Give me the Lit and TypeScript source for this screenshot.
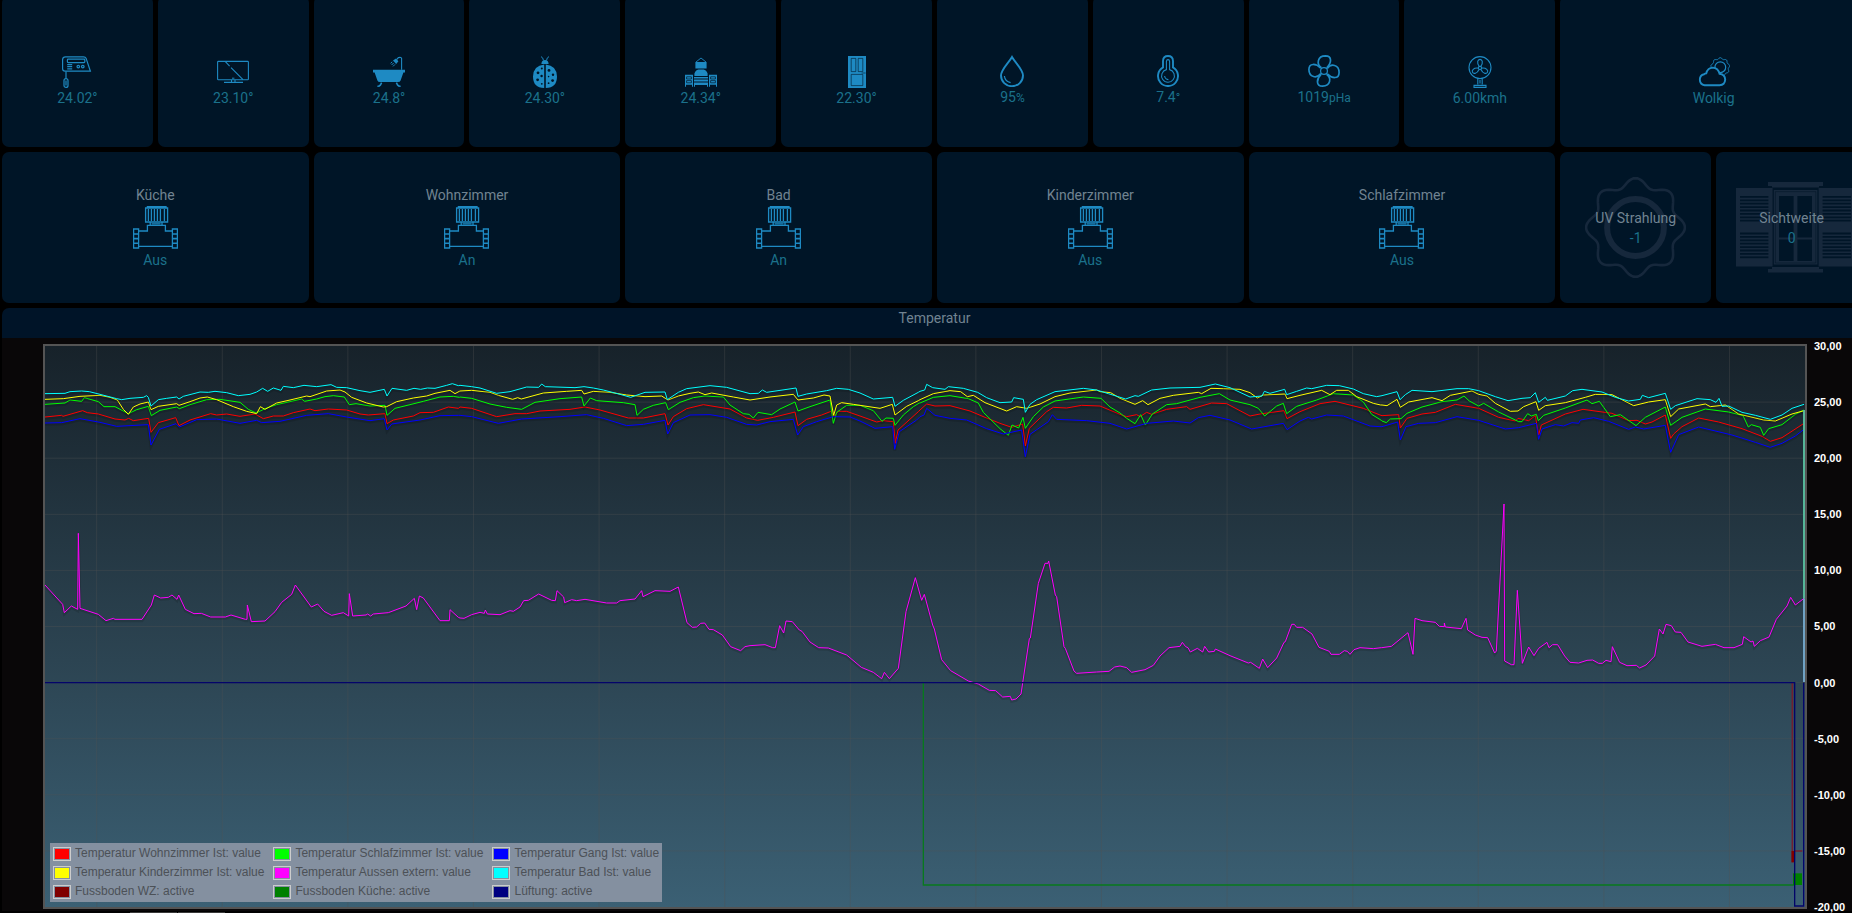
import { LitElement, html, svg, css, nothing, type SVGTemplateResult } from "lit";
import { customElement, property } from "lit/decorators.js";

/** Closed wavy ring: radius r, swing a, n lobes. */
function wave(cx: number, cy: number, r: number, a: number, n: number): string {
  const pts: string[] = [];
  for (let i = 0; i < 160; i++) {
    const t = (i / 160) * Math.PI * 2;
    const q = r + a * Math.cos(n * t);
    pts.push(`${(cx + q * Math.sin(t)).toFixed(2)} ${(cy - q * Math.cos(t)).toFixed(2)}`);
  }
  return `M${pts.join("L")}Z`;
}

const DARK = "#001527";

const ICONS: Record<string, SVGTemplateResult> = {
  mixer: svg`<g fill="none" stroke="currentColor" stroke-width="1.2">
    <path d="M4.5 .8H22.5Q24.4 .8 25.2 2.6L29.4 15.2H4Q1.6 15.2 1.6 12.8V3.4Q1.8 .8 4.5 .8Z"/>
    <rect x="6.4" y="3.2" width="17.4" height="3.4" rx=".8"/>
    <path d="M6.2 8.6h5M6.2 10.6h5M6.2 12.8h5M5 15.4V22.5"/>
    <circle cx="17.3" cy="10.6" r="1.3"/><circle cx="21.8" cy="10.6" r="1.3"/>
    <rect x="3" y="22.6" width="4" height="8.8" rx="2"/><path d="M5 24.5v5"/></g>`,
  tv: svg`<g fill="none" stroke="currentColor" stroke-width="1.1">
    <rect x=".6" y="5.4" width="30.8" height="18.4" rx=".8"/>
    <path d="M8.4 5.6l4.2 4.6M14 11.6l12 12M14.5 24v2M18 24v2M7 26.4h19"/><path d="M15 22.2h2.4" stroke-width="1"/></g>`,
  bath: svg`<g fill="currentColor"><path d="M0 13.8H32V16.6H30.4L27.6 24.4Q27 26 25 26H7Q5 26 4.4 24.4L1.6 16.6H0Z"/>
    <g fill="none" stroke="currentColor"><path d="M28.6 13.8V2.4Q28.4 1 25.4 1.6L23.6 3.6" stroke-width="1.1"/>
    <path d="M8.6 26.6L7.4 29Q6.4 30.4 4.4 30.2M23.4 26.6L24.6 29Q25.6 30.4 27.6 30.2" stroke-width="1.6"/>
    <path d="M20.6 7l-2 2M22 8.4l-2 2M19.2 5.8l-1.6 1.6" stroke-width="1"/></g>
    <path d="M20 4.6l3-2 2.4 2.6-2.2 2.8z"/></g>`,
  bug: svg`<g fill="currentColor"><path d="M12.4 8Q12.6 4 16 4T19.6 8Z"/>
    <path d="M15.2 8.4V32Q4 31.6 4 20.4 4.4 9.4 15.2 8.4ZM16.8 8.4V32Q28 31.6 28 20.4 27.6 9.4 16.8 8.4Z"/>
    <path d="M14.4 4.4Q14.4 1.8 12 .6M17.6 4.4Q17.6 1.8 20 .6" fill="none" stroke="currentColor" stroke-width="1"/>
    <g fill="${DARK}"><circle cx="12.8" cy="12.4" r="1"/><circle cx="9" cy="16.8" r="1.4"/><circle cx="12.6" cy="20" r="1.2"/>
    <circle cx="8.6" cy="23.8" r="1.4"/><circle cx="12.8" cy="27.8" r=".9"/><circle cx="20" cy="14.4" r="1.4"/>
    <circle cx="24" cy="18.8" r="1.2"/><circle cx="19.6" cy="20.6" r=".8"/><circle cx="23.6" cy="24.6" r="1.4"/><circle cx="19.6" cy="27.2" r=".9"/></g></g>`,
  bed: svg`<g fill="currentColor"><path d="M10.4 6H21.6V12.4H10.4Z"/>
    <path d="M11 6L16 2L21 6" fill="none" stroke="currentColor" stroke-width=".9"/>
    <path d="M9.4 20V17.6Q10.6 14 13.4 13.6H18.6Q21.4 14 22.6 17.6V20ZM9 21H23V22.4H9ZM9 23.6H23V25.4H9ZM9 26.4H23V30.8H22V29H10V30.8H9Z"/>
    <path d="M0 18.8H8V30.8H7V28.8H1V30.8H0ZM24 18.8H32V30.8H31V28.8H25V30.8H24Z"/>
    <path d="M1.6 20.8H6.4V23H1.6ZM1.6 24.6H6.4V26.8H1.6ZM25.6 20.8H30.4V23H25.6ZM25.6 24.6H30.4V26.8H25.6Z" fill="none" stroke="${DARK}" stroke-width=".7"/></g>`,
  door: svg`<path d="M7 0H25V32H7Z" fill="currentColor"/>
    <g fill="none" stroke="${DARK}" stroke-width=".6"><path d="M10.2 2.4H14.8V15.6H10.2ZM17.2 2.4H21.8V15.6H17.2ZM10.2 18.4H21.8V29.6H10.2Z"/><path d="M20.6 17h4"/></g>`,
  drop: svg`<g fill="none" stroke="currentColor"><path d="M16 2C19.6 8.4 27 14.6 27 20.6A11 10.6 0 0 1 5 20.6C5 14.6 12.4 8.4 16 2Z" stroke-width="1.9"/>
    <path d="M8.4 21Q9 26.6 14.6 27.6" stroke-width="1.2"/></g>`,
  thermo: svg`<g fill="none" stroke="currentColor"><path d="M11 12.4V6Q11.2 1 16 1T21 6V12.4A10 10 0 1 1 11 12.4Z" stroke-width="1.9"/>
    <path d="M14.4 14.6V6.4Q14.6 4.6 16 4.6T17.6 6.4V14.6A6.4 6.4 0 1 1 14.4 14.6Z" stroke-width="1.1"/>
    <path d="M12.6 21Q13 24.2 16.4 24.6" stroke-width="1.1"/></g>`,
  rotor: svg`<g fill="none" stroke="currentColor" stroke-width="1.7">
    ${[0, 90, 180, 270].map((a) => svg`<path transform="rotate(${a} 16 16)" d="M13.4 12.8C8.2 9 9.4 1 17.4 .9C24.4 1 23.6 8 18.8 12.8"/>`)}
    <circle cx="16" cy="16" r="3.4" stroke-width="1.2"/></g>`,
  fan: svg`<g fill="none" stroke="currentColor" stroke-width="1.1"><circle cx="16" cy="11.6" r="11"/>
    ${[0, 120, 240].map((a) => svg`<path transform="rotate(${a} 16 12)" d="M15.2 10.4C12.4 6.6 13.8 3.4 16 3.4S19.6 6.6 16.8 10.4"/>`)}
    <circle cx="16" cy="12" r="1.6"/><path d="M13.8 22.6V28.6M18.2 22.6V28.6M16 24v3.6" /><path d="M10 31.4V29.4H22V31.4Z"/></g>`,
  cloud: svg`<g fill="none" stroke="currentColor"><path d="${wave(22.3, 11.2, 8.8, 0.7, 9)}" stroke-width="1"/>
    <circle cx="22.3" cy="11.2" r="5.4" stroke-width="1.2"/>
    <path d="M6.6 29.2A5.6 5.6 0 0 1 6.2 18.2Q7 17.4 8.2 17.4Q9.6 11.8 14.8 11.6Q20 11.8 21.6 17.8Q27 18.6 27.2 23.6Q26.8 29 21.6 29.2Z" fill="${DARK}" stroke-width="1.9"/></g>`,
  valve: svg`<g fill="none" stroke="currentColor" stroke-width="1.3">
    <path d="M14.4 3V1.6H33V3M12.6 3H34.6V17H12.6ZM15.4 4V16M18.4 4V16M21.4 4V16M24.4 4V16M27.4 4V16M31.4 4V16"/>
    <path d="M17.2 17V20M29 17V20M18.6 18.8h9"/>
    <path d="M5.6 26H14.4V20.4H32.4V26H39.4M5.6 41.4H39.4"/>
    <path d="M.6 24H5.6V43H.6ZM39.4 24H44.4V43H39.4Z"/><path d="M.6 29H5.6M.6 33.6H5.6M.6 38.2H5.6M39.4 29H44.4M39.4 33.6H44.4M39.4 38.2H44.4" stroke-width="1.6"/></g>`,
  uv: svg`<g fill="none" stroke="currentColor"><path d="${wave(50.5, 50.5, 45.2, 4.2, 8)}" stroke-width="2.6"/>
    <circle cx="50.5" cy="50.5" r="28.4" stroke-width="6"/></g>`,
  window: svg`<g fill="currentColor"><path d="M32 5H87V9H83V10.6H36V9H32ZM32 95.6H87V92H83V90H36V92H32Z"/>
    ${[0, 82.6].map((x) => svg`<path d="M${x} 11H${x + 36.6}V89.6H${x}Z"/>
      ${[19, 55.6].map((y) => [0, 1, 2, 3, 4, 5, 6, 7].map((i) => svg`<path d="M${x + 4} ${y + i * 3.4}h28.4v1.8h-28.4z" fill="${DARK}"/>`))}`)}
    <path d="M37.8 13H81.4V87.6H37.8Z"/>
    <path d="M43 19H57.6V60.4H43ZM61.4 19H76V60.4H61.4ZM43 62.4H57.6V84H43ZM61.4 62.4H76V84H61.4Z" fill="${DARK}"/>
    <path d="M39.4 14.6H79.8V86H39.4Z" fill="none" stroke="${DARK}" stroke-width=".5"/></g>`,
};

interface Tile {
  icon: string;
  title?: string;
  value: string;
  unit?: string;
  kind: "sensor" | "valve" | "backdrop";
  span: number;
}

const sensor = (icon: string, value: string, unit = "", span = 1): Tile => ({ icon, value, unit, span, kind: "sensor" });
const valve = (title: string, value: string): Tile => ({ icon: "valve", title, value, span: 2, kind: "valve" });
const backdrop = (icon: string, title: string, value: string): Tile => ({ icon, title, value, span: 1, kind: "backdrop" });

const TILES: Tile[] = [
  sensor("mixer", "24.02°"),
  sensor("tv", "23.10°"),
  sensor("bath", "24.8°"),
  sensor("bug", "24.30°"),
  sensor("bed", "24.34°"),
  sensor("door", "22.30°"),
  sensor("drop", "95", "%"),
  sensor("thermo", "7.4", "°"),
  sensor("rotor", "1019", "pHa"),
  sensor("fan", "6.00kmh"),
  sensor("cloud", "Wolkig", "", 2),
  valve("Küche", "Aus"),
  valve("Wohnzimmer", "An"),
  valve("Bad", "An"),
  valve("Kinderzimmer", "Aus"),
  valve("Schlafzimmer", "Aus"),
  backdrop("uv", "UV Strahlung", "-1"),
  backdrop("window", "Sichtweite", "0"),
];

@customElement("dash-tile")
class DashTile extends LitElement {
  @property({ attribute: false }) tile!: Tile;

  static styles = css`
    :host {
      display: grid;
      place-items: center;
      position: relative;
      overflow: hidden;
      background: #001527;
      border-radius: 7px;
      color: #1b718b;
    }
    .body {
      position: relative;
      display: flex;
      flex-direction: column;
      align-items: center;
      line-height: 20px;
    }
    .sensor {
      padding-top: 20px;
    }
    .title {
      color: #718391;
    }
    svg {
      display: block;
      color: #1e8ac3;
    }
    .unit {
      font-size: 12px;
    }
    .back {
      position: absolute;
      inset: 0;
      display: grid;
      place-items: center;
    }
    .back svg {
      color: #16283c;
    }
  `;

  render() {
    const t = this.tile;
    if (t.kind === "backdrop") {
      const wide = t.icon === "window";
      return html`<div class="back">
          <svg width=${wide ? 127 : 101} height="101" viewBox=${wide ? "-8 0 127 101" : "0 0 101 101"} aria-hidden="true">${ICONS[t.icon]}</svg>
        </div>
        <div class="body"><span class="title">${t.title}</span><span>${t.value}</span></div>`;
    }
    const size = t.kind === "valve" ? 45 : 32;
    return html`<div class="body ${t.kind}">
      ${t.title ? html`<span class="title">${t.title}</span>` : nothing}
      <svg width=${size} height=${size} viewBox="0 0 ${size} ${size}" aria-hidden="true">${ICONS[t.icon]}</svg>
      <span>${t.value}${t.unit ? html`<span class="unit">${t.unit}</span>` : nothing}</span>
    </div>`;
  }
}

/* The log is kept in four blocks; each begins at its own offset on the time scale. */
const BLOCKS = [-135, 1245, 2625, 4011];
const TOP = 138;
const WIDTH = 5280;
const HEIGHT = 1683;

interface Series {
  name: string;
  color: string;
  log?: string[];
}

const SERIES: Series[] = [
  {
    name: "Temperatur Wohnzimmer Ist: value",
    color: "#ff0000",
    log: [
      "135,351 185,346 189,349 248,332 262,338 295,342 345,357 375,360 386,355 400,362 446,355 453,397 475,368 527,353 537,377 570,360 632,341 650,345 680,342 720,349 765,342 790,356 820,348 850,348 880,338 930,327 945,332 985,327 1040,330 1080,342 1105,345 1155,341 1161,371 1180,360 1240,348 1260,338 1300,337 1345,321 1375,325",
      "0,321 35,325 110,350 165,341 200,341 240,333 330,328 375,321 420,330 505,354 550,354 615,341 624,375 640,350 680,326 730,314 810,327 860,354 893,361 940,352 1005,336 1014,377 1040,358 1085,345 1113,334 1121,350 1135,334 1160,334 1200,348 1250,366 1270,362 1300,365 1306,430 1314,390 1375,335",
      "0,330 20,312 45,318 90,317 150,333 195,352 240,370 275,382 308,372 316,438 328,385 380,335 400,322 440,324 485,316 540,318 600,343 620,350 650,344 660,350 680,337 695,343 740,328 800,320 810,328 875,309 920,311 990,348 1020,342 1092,332 1101,356 1140,335 1200,311 1245,304 1330,325 1380,345",
      "0,347 50,344 55,384 75,355 120,342 160,337 220,313 290,325 350,352 400,363 408,355 440,362 460,347 470,405 478,375 550,342 603,328 690,340 740,362 765,361 790,372 810,366 850,345 866,415 875,402 900,380 950,354 1010,366 1080,386 1140,409 1165,424 1200,413 1266,370",
    ],
  },
  {
    name: "Temperatur Schlafzimmer Ist: value",
    color: "#00ff00",
    log: [
      "135,313 195,309 210,300 245,304 253,293 295,305 312,320 345,320 385,341 410,329 445,319 454,347 480,331 530,321 538,326 570,314 620,299 660,298 720,307 745,328 768,339 800,324 830,314 905,297 914,304 950,297 975,290 1000,287 1033,291 1048,314 1068,311 1110,318 1155,316 1161,346 1185,325 1230,314 1270,304 1320,291 1360,289 1378,292",
      "0,291 35,295 90,312 140,322 185,328 225,307 300,296 365,291 372,318 391,294 410,302 490,308 525,314 531,346 550,328 580,316 617,308 625,329 660,307 700,293 735,288 790,291 810,315 850,341 867,343 880,354 894,337 935,344 960,327 1005,306 1014,333 1050,320 1110,300 1120,370 1130,337 1160,316 1200,316 1240,332 1266,364 1278,354 1300,355 1305,376 1330,345 1360,320 1378,309",
      "0,309 40,292 90,287 145,296 175,309 190,337 240,386 265,406 276,375 296,384 309,352 316,385 340,350 370,321 405,303 490,291 543,295 570,321 600,339 620,355 645,371 662,344 676,375 697,342 740,314 770,311 840,292 898,281 930,300 990,314 1015,325 1034,348 1070,318 1090,310 1100,341 1130,319 1190,300 1240,281 1300,285 1330,306 1355,343 1384,361",
      "0,363 13,368 25,357 57,356 75,340 120,321 180,305 225,300 246,288 262,303 290,318 305,310 350,336 410,365 420,365 437,341 448,348 463,343 469,362 485,346 550,324 615,300 630,311 652,304 665,322 685,350 715,344 762,377 790,352 850,321 866,376 900,352 970,327 1040,336 1083,347 1099,381 1108,374 1135,382 1145,406 1160,386 1200,374 1240,343 1266,330",
    ],
  },
  {
    name: "Temperatur Gang Ist: value",
    color: "#0000ff",
    log: [
      "135,369 185,368 240,356 300,367 350,379 445,374 453,435 478,388 528,371 538,381 590,359 650,357 720,370 770,361 785,368 840,364 920,346 985,341 1040,351 1110,362 1153,356 1161,390 1175,372 1260,360 1320,347 1375,346",
      "0,346 35,350 115,370 185,357 300,350 380,344 430,355 500,377 550,373 615,361 623,402 640,368 690,345 750,344 800,352 860,373 890,375 930,365 1000,358 1013,405 1030,380 1070,365 1120,350 1170,351 1200,363 1245,385 1298,380 1304,448 1318,395 1370,360",
      "0,350 12,345 20,325 45,346 90,355 140,360 200,386 250,402 305,390 316,470 330,403 385,365 397,344 410,358 500,362 570,370 620,387 680,370 760,363 810,369 835,353 870,346 930,360 995,387 1090,370 1101,389 1140,363 1165,352 1175,357 1220,345 1270,348 1350,378 1380,380",
      "0,380 47,366 55,420 72,380 110,370 160,368 225,350 290,361 370,387 410,383 463,370 470,418 480,387 520,374 545,378 570,368 590,370 595,360 635,353 680,364 740,388 760,381 785,387 850,376 866,457 890,404 950,381 1050,405 1120,427 1165,442 1200,430 1240,408 1266,388",
    ],
  },
  {
    name: "Temperatur Kinderzimmer Ist: value",
    color: "#ffff00",
    log: [
      "135,298 190,296 240,289 300,286 330,292 352,300 370,328 385,343 400,321 420,312 445,306 453,329 475,319 530,311 537,316 570,305 600,294 622,291 650,299 700,320 740,334 770,341 781,320 795,328 830,309 870,300 920,288 930,290 980,273 1020,270 1035,276 1055,292 1100,309 1150,321 1160,320 1190,305 1240,294 1280,288 1305,280 1350,271 1365,281 1378,274",
      "0,273 35,271 90,277 115,286 158,298 173,293 184,297 250,279 320,274 365,271 372,282 400,274 450,277 500,285 555,290 605,288 624,300 655,288 690,280 715,276 735,284 755,279 820,291 870,300 930,291 1000,283 1014,300 1060,294 1092,285 1110,288 1121,346 1130,315 1145,308 1180,313 1260,325 1297,313 1305,345 1340,319 1375,302",
      "0,299 40,281 90,272 122,275 142,290 160,286 195,308 260,333 290,320 320,325 360,312 405,290 450,279 530,270 540,275 572,278 600,295 645,313 668,302 684,314 720,295 760,286 835,277 845,281 873,265 910,266 960,268 990,278 1012,294 1030,285 1095,282 1101,296 1140,286 1205,271 1230,284 1250,271 1285,271 1310,290 1360,310 1382,315",
      "0,315 15,317 45,298 55,322 80,306 150,293 180,302 205,286 270,273 290,283 315,288 340,310 385,334 408,333 425,320 462,305 470,331 490,317 550,308 610,292 640,283 690,284 755,317 800,306 850,299 866,350 890,327 970,312 985,320 1030,315 1070,342 1145,360 1180,363 1230,342 1266,332",
    ],
  },
  {
    name: "Temperatur Aussen extern: value",
    color: "#ff00ff",
    log: [
      "135,855 188,913 193,938 214,918 233,928 235,700 240,925 295,943 318,962 340,955 345,958 426,958 454,915 463,885 482,894 505,892 516,885 531,898 536,885 556,928 582,941 604,940 632,951 676,951 693,945 736,958 741,958 742,915 754,965 795,963 825,935 845,907 875,883 886,855 934,921 953,912 972,934 995,946 1030,938 1046,948 1048,881 1058,948 1098,945 1103,942 1112,948 1120,942 1165,938 1218,918 1243,895 1250,929 1258,888 1270,894 1320,962 1348,962 1350,929 1375,952",
      "0,954 12,955 35,944 60,937 73,940 76,930 82,942 120,944 150,932 160,934 180,921 191,902 205,901 236,882 275,901 286,902 291,872 311,891 314,908 335,899 350,902 375,898 440,909 470,909 480,902 525,897 545,872 549,890 585,872 630,874 655,861 681,968 697,982 710,981 722,970 734,969 747,988 760,989 787,1005 812,1040 842,1052 855,1040 870,1037 915,1034 938,1043 946,1043 959,977 971,999 978,963 997,965 1018,990 1026,994 1050,1026 1076,1043 1105,1044 1160,1065 1204,1102 1240,1117 1265,1136 1273,1117 1288,1136 1315,1105 1338,935 1366,833",
      "5,901 13,883 38,975 43,987 65,1079 92,1112 145,1143 175,1152 208,1171 227,1172 248,1191 271,1189 275,1200 288,1197 303,1182 328,1016 331,1014 355,850 375,790 384,790 386,783 406,885 410,890 432,1040 436,1045 462,1113 470,1120 530,1116 567,1114 584,1101 600,1098 620,1103 635,1117 675,1109 700,1096 720,1068 747,1043 780,1039 787,1027 797,1040 804,1043 811,1056 832,1045 848,1056 854,1039 866,1056 883,1054 886,1047 930,1067 985,1089 992,1087 1018,1105 1028,1077 1043,1103 1070,1074 1092,1027 1096,1025 1115,973 1123,973 1130,982 1148,982 1176,1002 1197,1042 1228,1054 1233,1063 1258,1063 1273,1052 1282,1054 1290,1063 1302,1049 1320,1043 1360,1046 1384,1043",
      "0,1043 28,1039 78,998 93,1063 99,955 120,962 160,967 172,979 187,980 187,969 190,981 238,986 252,955 257,990 280,1005 300,1012 317,1013 338,1059 343,1053 366,612 368,1083 388,1094 396,1094 406,871 421,1090 440,1041 456,1067 470,1045 495,1027 501,1043 512,1034 527,1034 548,1068 564,1087 590,1089 615,1081 632,1080 650,1090 661,1090 672,1081 687,1085 691,1040 713,1087 735,1097 763,1096 773,1104 792,1095 818,1068 832,987 843,1002 852,973 868,977 880,996 897,997 918,1026 960,1039 1000,1033 1026,1043 1056,1043 1081,1033 1085,1010 1107,1026 1113,1023 1117,1039 1135,1022 1161,1011 1183,958 1215,918 1226,892 1240,915 1266,895",
    ],
  },
  {
    name: "Temperatur Bad Ist: value",
    color: "#00ffff",
    log: [
      "135,281 195,280 210,275 245,273 268,275 300,283 350,296 365,299 390,295 430,292 440,287 445,292 453,318 475,299 500,295 530,291 537,297 550,289 600,276 625,277 645,274 680,278 715,287 750,283 770,276 788,265 803,274 820,264 843,271 850,259 880,263 912,256 950,260 993,254 1010,262 1040,263 1080,272 1110,277 1153,268 1161,288 1176,265 1220,271 1242,265 1262,268 1282,264 1305,265 1340,256 1357,251 1375,257",
      "0,256 35,260 60,264 110,280 150,275 200,261 236,262 245,252 256,260 345,263 372,260 400,264 430,270 480,283 512,292 555,277 615,276 622,299 655,277 680,266 750,257 800,262 870,281 895,280 907,270 920,277 1008,264 1014,289 1040,282 1100,272 1130,265 1165,268 1200,279 1240,297 1298,292 1305,319 1330,301 1375,277",
      "0,274 14,270 20,253 38,263 75,268 85,260 130,265 173,277 200,293 240,308 275,306 281,293 310,298 316,337 330,313 350,299 405,275 490,265 530,270 565,281 617,297 645,287 655,289 695,270 750,264 840,262 886,252 930,263 990,291 1026,288 1033,274 1050,280 1094,268 1100,284 1130,274 1160,264 1175,266 1220,256 1258,257 1300,267 1330,281 1370,290",
      "0,287 45,275 54,299 70,284 90,271 150,275 225,266 260,266 290,272 340,290 378,302 420,295 445,293 460,278 470,307 490,292 496,301 550,288 572,272 600,268 660,276 700,292 740,303 775,298 781,286 800,293 850,280 866,328 880,317 945,296 985,299 1002,307 1011,295 1020,319 1040,318 1080,337 1120,346 1165,358 1200,345 1230,325 1266,313",
    ],
  },
  { name: "Fussboden WZ: active", color: "#800000" },
  { name: "Fussboden Küche: active", color: "#008000" },
  { name: "Lüftung: active", color: "#000080" },
];

function toPoints(log: string[]): string {
  return log
    .map((block, i) =>
      block
        .split(" ")
        .map((p) => {
          const [x, y] = p.split(",").map(Number);
          return `${x + BLOCKS[i]},${y}`;
        })
        .join(" ")
    )
    .join(" ");
}

@customElement("temp-chart")
class TempChart extends LitElement {
  static styles = css`
    :host {
      display: flex;
      min-height: 0;
      padding: 6px 0 2px 41px;
      background: #090708;
    }
    .plot {
      position: relative;
      flex: 1;
      min-width: 0;
      border: 2px solid #545454;
      background: linear-gradient(#17222a, #2c4452 56%, #3b6074);
    }
    .lines {
      position: absolute;
      inset: 0;
      width: 100%;
      height: 100%;
    }
    .lines * {
      vector-effect: non-scaling-stroke;
    }
    .lines polyline,
    .lines path {
      fill: none;
    }
    .grid {
      stroke: #545454;
      stroke-opacity: 0.35;
    }
    .shadow {
      stroke: #000000;
      stroke-opacity: 0.12;
      stroke-width: 3px;
    }
    .legend {
      position: absolute;
      left: 5px;
      bottom: 5px;
      display: grid;
      grid-template-columns: repeat(3, auto);
      gap: 4px 9px;
      margin: 0;
      padding: 3px;
      list-style: none;
      background: #8490a0;
      color: #4c5157;
      font: 12px/15px "Liberation Sans", Arial, sans-serif;
    }
    .legend li {
      display: flex;
      align-items: center;
      gap: 4px;
      white-space: nowrap;
    }
    .swatch {
      box-sizing: border-box;
      width: 18px;
      height: 14px;
      padding: 1px;
      border: 1px solid #cccccc;
      background-clip: content-box;
    }
    .axis {
      display: flex;
      flex-direction: column;
      justify-content: space-between;
      box-sizing: border-box;
      width: 60px;
      margin: -4px 0;
      padding-left: 7px;
      color: #ffffff;
      font: bold 11px/12px "Liberation Sans", Arial, sans-serif;
    }
  `;

  render() {
    const ticks = [30, 25, 20, 15, 10, 5, 0, -5, -10, -15, -20];
    const days = Array.from({ length: 14 }, (_, i) => 155 + i * 376.8);
    const logs = SERIES.filter((s) => s.log).map((s) => ({ color: s.color, points: toPoints(s.log!) }));
    return html`
      <div class="plot">
        <svg class="lines" viewBox="0 ${TOP} ${WIDTH} ${HEIGHT}" preserveAspectRatio="none" role="img" aria-label="Temperaturverlauf">
          <g class="grid">
            ${days.map((x) => svg`<line x1=${x} x2=${x} y1=${TOP} y2=${TOP + HEIGHT}/>`)}
            ${ticks.slice(1, -1).map((_, i) => {
              const y = TOP + ((i + 1) * HEIGHT) / 10;
              return svg`<line x1="0" x2=${WIDTH} y1=${y} y2=${y}/>`;
            })}
          </g>
          ${logs.map((l) => svg`<polyline class="shadow" transform="translate(0 4)" points=${l.points}/><polyline points=${l.points} stroke=${l.color}/>`)}
          <path d="M5277 330V895" stroke="#55b598" stroke-width="2"/>
          <path d="M5277 895V1146" stroke="#6fa2c4" stroke-width="2"/>
          <path d="M2635 1148V1755H5250" stroke="#087a1c" stroke-width="1.3"/>
          <rect x="5244" y="1720" width="27" height="35" fill="#008000"/>
          <path d="M5242 1148V1687M5249 1653H5272" stroke="#702030" stroke-width="1.5"/>
          <path d="M5244 1653V1687" stroke="#800000" stroke-width="3"/>
          <path d="M0 1148H5249V1818H5276V1148" stroke="#04046a" stroke-width="1.3"/>
        </svg>
        <ul class="legend">
          ${SERIES.map((s) => html`<li><span class="swatch" style="background-color:${s.color}"></span>${s.name}</li>`)}
        </ul>
      </div>
      <div class="axis">${ticks.map((t) => html`<span>${t},00</span>`)}</div>
    `;
  }
}

@customElement("app-root")
class AppRoot extends LitElement {
  static styles = css`
    :host {
      display: flex;
      flex-direction: column;
      box-sizing: border-box;
      height: 100vh;
      min-height: 640px;
      overflow: hidden;
      padding-left: 2px;
      background: #000000;
      font: 14px/20px Roboto, "Liberation Sans", sans-serif;
    }
    .tiles,
    .panel {
      width: calc(100% + 15px);
    }
    .tiles {
      display: grid;
      flex: none;
      grid-template-columns: repeat(12, minmax(0, 1fr));
      grid-auto-rows: 151px;
      gap: 5px;
      margin-top: -4px;
      margin-bottom: 5px;
    }
    .wide {
      grid-column: span 2;
    }
    .panel {
      display: flex;
      flex: 1;
      flex-direction: column;
      min-height: 0;
      border-radius: 7px 0 0 0;
      background: #001428;
    }
    h2 {
      flex: none;
      margin: 0;
      height: 30px;
      color: #718391;
      font: inherit;
      text-align: center;
    }
    temp-chart {
      flex: 1;
    }
    .tabs {
      display: flex;
      flex: none;
      gap: 1px;
      padding: 1px 0 0 128px;
    }
    .tabs span {
      width: 47px;
      height: 1px;
      background: #3a3a3a;
    }
  `;

  render() {
    return html`
      <section class="tiles">
        ${TILES.map((t) => html`<dash-tile class=${t.span === 2 ? "wide" : ""} .tile=${t}></dash-tile>`)}
      </section>
      <section class="panel">
        <h2>Temperatur</h2>
        <temp-chart></temp-chart>
      </section>
      <div class="tabs"><span></span><span></span></div>
    `;
  }
}
